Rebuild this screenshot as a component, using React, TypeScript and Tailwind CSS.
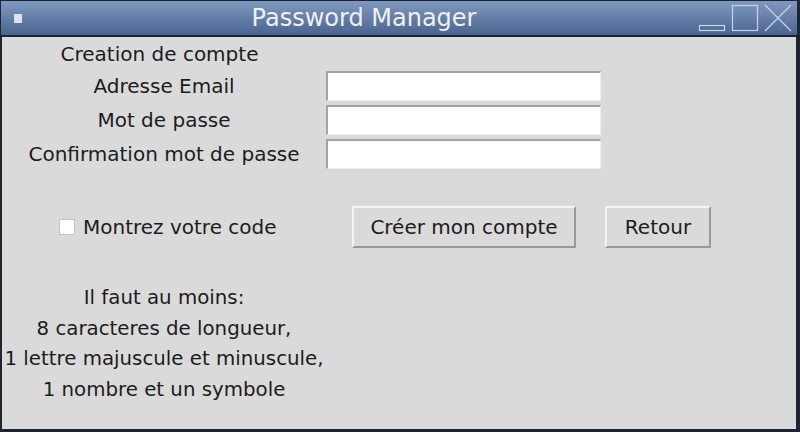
import React from 'react'

const font = { fontFamily: '"DejaVu Sans", sans-serif' }

function Entry() {
    return (
        <div className="w-[275px] h-[30px] bg-white border-t-2 border-l-2 border-b border-r border-t-[#a3a3a3] border-l-[#a3a3a3] border-b-[#f0f0f0] border-r-[#f0f0f0]"></div>
    )
}

function Button({ label, width }: { label: string; width: string }) {
    return (
        <div className={`${width} h-[42px] flex items-center justify-center bg-[#dadada] border-2 border-t-[#f4f4f4] border-l-[#f4f4f4] border-b-[#9a9a9a] border-r-[#9a9a9a] text-[#1c1c1c]`}>
            {label}
        </div>
    )
}

export default function App() {
    const rules = [
        'Il faut au moins:',
        '8 caracteres de longueur,',
        '1 lettre majuscule et minuscule,',
        '1 nombre et un symbole'
    ]

    return (
        <div className="w-[800px] h-[432px] bg-[#1d2533] flex flex-col overflow-hidden" style={font}>
            {/* Title bar */}
            <div className="h-[36px] mt-[1px] ml-[1px] mr-[3px] flex items-center bg-gradient-to-b from-[#8099bf] to-[#4b6590] border-b-2 border-[#1d2533]">
                <div className="w-[8px] h-[9px] bg-[#dde4ee] ml-[13px]"></div>
                <div className="flex-1 text-center text-[24px] text-[#eef2f8] pl-[8px]">Password Manager</div>
                <div className="flex items-center gap-[5px] mr-[5px]">
                    <svg width="28" height="28" viewBox="0 0 28 28">
                        <rect x="1.5" y="21.5" width="25" height="5" fill="none" stroke="#c9d3e2" strokeWidth="1.2" />
                    </svg>
                    <svg width="28" height="28" viewBox="0 0 28 28">
                        <rect x="1.5" y="1.5" width="25" height="25" fill="none" stroke="#c9d3e2" strokeWidth="1.2" />
                    </svg>
                    <svg width="28" height="28" viewBox="0 0 28 28">
                        <path d="M1 1L27 27M27 1L1 27" stroke="#c9d3e2" strokeWidth="1.2" />
                    </svg>
                </div>
            </div>

            {/* Body */}
            <div className="flex-1 bg-[#dadada] ml-[2px] mr-[4px] mb-[3px] text-[20px] text-[#1c1c1c] flex flex-col">
                <div className="grid grid-cols-[324px_275px] gap-y-[4px] pt-[3px]">
                    <div className="h-[27px] flex items-center justify-center pr-[9px] whitespace-nowrap">Creation de compte</div>
                    <div></div>
                    <div className="h-[30px] flex items-center justify-center whitespace-nowrap">Adresse Email</div>
                    <Entry />
                    <div className="h-[30px] flex items-center justify-center whitespace-nowrap">Mot de passe</div>
                    <Entry />
                    <div className="h-[30px] flex items-center justify-center whitespace-nowrap">Confirmation mot de passe</div>
                    <Entry />
                </div>

                <div className="flex items-center mt-[37px] h-[42px]">
                    <div className="w-[324px] flex items-center gap-[8px] pl-[57px] whitespace-nowrap">
                        <div className="w-[16px] h-[16px] bg-white border border-[#c4c4c4]"></div>
                        <span>Montrez votre code</span>
                    </div>
                    <div className="ml-[26px]">
                        <Button label="Créer mon compte" width="w-[224px]" />
                    </div>
                    <div className="ml-[29px]">
                        <Button label="Retour" width="w-[106px]" />
                    </div>
                </div>

                <div className="w-[324px] flex flex-col items-center mt-[35px] text-[19.8px]">
                    {rules.map((line, index) => (
                        <div key={index} className="h-[30.5px] flex items-center whitespace-nowrap">{line}</div>
                    ))}
                </div>
            </div>
        </div>
    )
}
